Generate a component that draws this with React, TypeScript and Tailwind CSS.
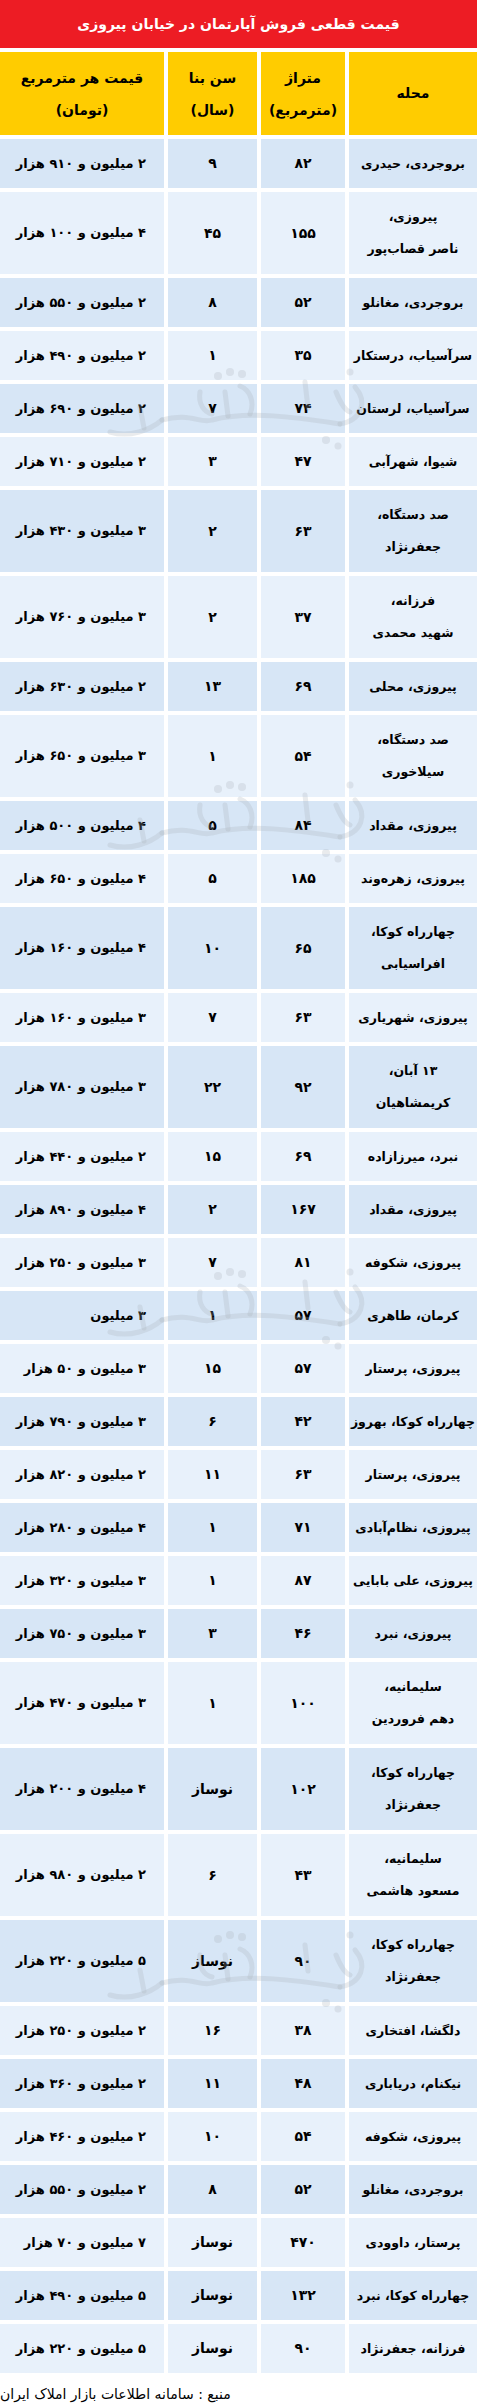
import React from "react";

type Row = { name: string[]; area: string; age: string; price: string };

const rows: Row[] = [
  { name: ["بروجردی، حیدری"], area: "۸۲", age: "۹", price: "۲ میلیون و ۹۱۰ هزار" },
  { name: ["پیروزی،", "ناصر قصاب‌پور"], area: "۱۵۵", age: "۴۵", price: "۴ میلیون و ۱۰۰ هزار" },
  { name: ["بروجردی، مغانلو"], area: "۵۲", age: "۸", price: "۲ میلیون و ۵۵۰ هزار" },
  { name: ["سرآسیاب، درستکار"], area: "۳۵", age: "۱", price: "۲ میلیون و ۴۹۰ هزار" },
  { name: ["سرآسیاب، لرستان"], area: "۷۴", age: "۷", price: "۲ میلیون و ۶۹۰ هزار" },
  { name: ["شیوا، شهرآبی"], area: "۴۷", age: "۳", price: "۲ میلیون و ۷۱۰ هزار" },
  { name: ["صد دستگاه،", "جعفرنژاد"], area: "۶۳", age: "۲", price: "۳ میلیون و ۴۳۰ هزار" },
  { name: ["فرزانه،", "شهید محمدی"], area: "۳۷", age: "۲", price: "۳ میلیون و ۷۶۰ هزار" },
  { name: ["پیروزی، محلی"], area: "۶۹", age: "۱۳", price: "۲ میلیون و ۶۳۰ هزار" },
  { name: ["صد دستگاه،", "سیلاخوری"], area: "۵۴", age: "۱", price: "۳ میلیون و ۶۵۰ هزار" },
  { name: ["پیروزی، مقداد"], area: "۸۴", age: "۵", price: "۴ میلیون و ۵۰۰ هزار" },
  { name: ["پیروزی، زهره‌وند"], area: "۱۸۵", age: "۵", price: "۴ میلیون و ۶۵۰ هزار" },
  { name: ["چهارراه کوکا،", "افراسیابی"], area: "۶۵", age: "۱۰", price: "۴ میلیون و ۱۶۰ هزار" },
  { name: ["پیروزی، شهریاری"], area: "۶۳", age: "۷", price: "۳ میلیون و ۱۶۰ هزار" },
  { name: ["۱۳ آبان،", "کریمشاهیان"], area: "۹۲", age: "۲۲", price: "۳ میلیون و ۷۸۰ هزار" },
  { name: ["نبرد، میرزازاده"], area: "۶۹", age: "۱۵", price: "۲ میلیون و ۴۴۰ هزار" },
  { name: ["پیروزی، مقداد"], area: "۱۶۷", age: "۲", price: "۴ میلیون و ۸۹۰ هزار" },
  { name: ["پیروزی، شکوفه"], area: "۸۱", age: "۷", price: "۳ میلیون و ۲۵۰ هزار" },
  { name: ["کرمان، طاهری"], area: "۵۷", age: "۱", price: "۳ میلیون" },
  { name: ["پیروزی، پرستار"], area: "۵۷", age: "۱۵", price: "۳ میلیون و ۵۰ هزار" },
  { name: ["چهارراه کوکا، بهروز"], area: "۴۲", age: "۶", price: "۳ میلیون و ۷۹۰ هزار" },
  { name: ["پیروزی، پرستار"], area: "۶۳", age: "۱۱", price: "۲ میلیون و ۸۲۰ هزار" },
  { name: ["پیروزی، نظام‌آبادی"], area: "۷۱", age: "۱", price: "۴ میلیون و ۲۸۰ هزار" },
  { name: ["پیروزی، علی بابایی"], area: "۸۷", age: "۱", price: "۳ میلیون و ۳۲۰ هزار" },
  { name: ["پیروزی، نبرد"], area: "۴۶", age: "۳", price: "۳ میلیون و ۷۵۰ هزار" },
  { name: ["سلیمانیه،", "دهم فروردین"], area: "۱۰۰", age: "۱", price: "۳ میلیون و ۴۷۰ هزار" },
  { name: ["چهارراه کوکا،", "جعفرنژاد"], area: "۱۰۲", age: "نوساز", price: "۴ میلیون و ۲۰۰ هزار" },
  { name: ["سلیمانیه،", "مسعود هاشمی"], area: "۴۳", age: "۶", price: "۲ میلیون و ۹۸۰ هزار" },
  { name: ["چهارراه کوکا،", "جعفرنژاد"], area: "۹۰", age: "نوساز", price: "۵ میلیون و ۲۲۰ هزار" },
  { name: ["دلگشا، افتخاری"], area: "۳۸", age: "۱۶", price: "۲ میلیون و ۲۵۰ هزار" },
  { name: ["نیکنام، دریاباری"], area: "۴۸", age: "۱۱", price: "۲ میلیون و ۳۶۰ هزار" },
  { name: ["پیروزی، شکوفه"], area: "۵۴", age: "۱۰", price: "۲ میلیون و ۴۶۰ هزار" },
  { name: ["بروجردی، مغانلو"], area: "۵۲", age: "۸", price: "۲ میلیون و ۵۵۰ هزار" },
  { name: ["پرستار، داوودی"], area: "۴۷۰", age: "نوساز", price: "۷ میلیون و ۷۰ هزار" },
  { name: ["چهارراه کوکا، نبرد"], area: "۱۳۲", age: "نوساز", price: "۵ میلیون و ۴۹۰ هزار" },
  { name: ["فرزانه، جعفرنژاد"], area: "۹۰", age: "نوساز", price: "۵ میلیون و ۲۲۰ هزار" },
];

const font = { fontFamily: '"DejaVu Sans", "Noto Sans", sans-serif' };

function Watermark({ top }: { top: string }) {
  return (
    <svg
      className={`pointer-events-none absolute left-[100px] ${top}`}
      width="280"
      height="90"
      viewBox="0 0 280 90"
      fill="none"
    >
      <g stroke="#a9aeb8" strokeOpacity="0.25" strokeWidth="5" strokeLinecap="round" strokeLinejoin="round">
        <path d="M10 70 C 30 76, 50 68, 62 58" />
        <path d="M40 45 L 44 66" />
        <path d="M62 58 C 90 50, 100 62, 112 58 C 150 48, 200 56, 240 62" />
        <path d="M100 30 C 98 42, 104 50, 112 52" />
        <path d="M125 30 L 128 54" />
        <path d="M140 24 C 150 28, 155 40, 150 52" />
        <path d="M240 62 C 262 58, 268 40, 255 25" />
        <path d="M236 30 C 240 40, 244 48, 250 50" />
        <path d="M205 20 L 208 46" />
      </g>
      <g fill="#a9aeb8" fillOpacity="0.25">
        <circle cx="118" cy="14" r="4" />
        <circle cx="130" cy="10" r="4" />
        <circle cx="142" cy="12" r="4" />
        <circle cx="226" cy="78" r="4" />
        <circle cx="238" cy="84" r="3.5" />
        <circle cx="250" cy="10" r="3.5" />
      </g>
    </svg>
  );
}

export default function App() {
  return (
    <div dir="rtl" className="relative w-[477px] bg-white text-black" style={font}>
      <div className="h-[48px] bg-[#ed1c24] flex items-center justify-center text-white font-bold text-[14px] whitespace-nowrap">
        قیمت قطعی فروش آپارتمان در خیابان پیروزی
      </div>
      <div className="mt-[4px] grid grid-cols-[128px_84px_89px_1fr] gap-x-[4px] h-[83px] text-[14px] font-bold whitespace-nowrap">
        <div className="bg-[#ffcc00] flex items-center justify-center">محله</div>
        <div className="bg-[#ffcc00] flex flex-col items-center justify-center leading-[32px]">
          <span>متراژ</span>
          <span>(مترمربع)</span>
        </div>
        <div className="bg-[#ffcc00] flex flex-col items-center justify-center leading-[32px]">
          <span>سن بنا</span>
          <span>(سال)</span>
        </div>
        <div className="bg-[#ffcc00] flex flex-col items-center justify-center leading-[32px]">
          <span>قیمت هر مترمربع</span>
          <span>(تومان)</span>
        </div>
      </div>
      <div className="mt-[4px] flex flex-col gap-y-[4px] text-[13px] font-bold whitespace-nowrap">
        {rows.map((r, i) => {
          const bg = i % 2 === 0 ? "bg-[#d7e6f6]" : "bg-[#e8f1fb]";
          const h = r.name.length > 1 ? "h-[82px]" : "h-[49px]";
          return (
            <div key={i} className={`grid grid-cols-[128px_84px_89px_1fr] gap-x-[4px] ${h}`}>
              <div className={`${bg} flex flex-col items-center justify-center leading-[32px] text-[12.5px]`}>
                {r.name.map((n, j) => (
                  <span key={j}>{n}</span>
                ))}
              </div>
              <div className={`${bg} flex items-center justify-center text-[14px]`}>{r.area}</div>
              <div className={`${bg} flex items-center justify-center text-[14px]`}>{r.age}</div>
              <div className={`${bg} flex items-center justify-start pr-[18px]`}>{r.price}</div>
            </div>
          );
        })}
      </div>
      <div className="mt-[10px] text-left text-[14px] leading-[22px] whitespace-nowrap">منبع : سامانه اطلاعات بازار املاک ایران</div>
      <Watermark top="top-[362px]" />
      <Watermark top="top-[775px]" />
      <Watermark top="top-[1262px]" />
      <Watermark top="top-[1925px]" />
    </div>
  );
}
